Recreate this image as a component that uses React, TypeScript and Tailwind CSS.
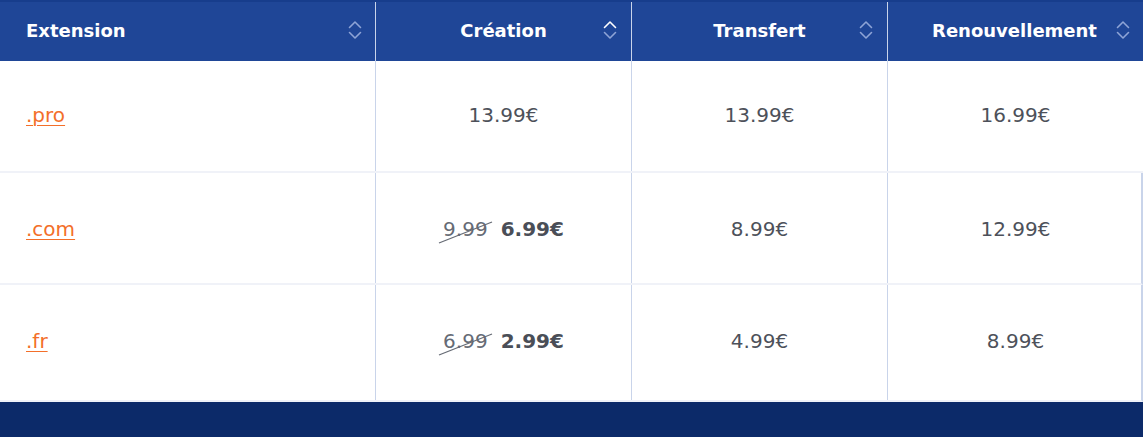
import React from "react";

const font = { fontFamily: "'DejaVu Sans', 'Open Sans', sans-serif" };

function SortIcon({ active }: { active?: boolean }) {
  return (
    <svg width="16" height="24" viewBox="0 0 16 24" fill="none" strokeWidth="1.6" strokeLinecap="round" strokeLinejoin="round">
      <path d="M2.5 9.5 L8 4 L13.5 9.5" stroke={active ? "#ffffff" : "#8ea4d6"} />
      <path d="M2.5 14.5 L8 20 L13.5 14.5" stroke="#8ea4d6" />
    </svg>
  );
}

function Old({ v }: { v: string }) {
  return (
    <span className="relative inline-block text-[#666b75]">
      {v}
      <svg className="absolute left-[-5px] top-[2px]" width="56" height="30" viewBox="0 0 56 30" fill="none">
        <path d="M1 27 L54 6" stroke="#666b75" strokeWidth="1.3" />
      </svg>
    </span>
  );
}

type Row = { ext: string; creation: React.ReactNode; transfert: string; renew: string; h: string; pb: string; right?: boolean };

const rows: Row[] = [
  { ext: ".pro", creation: "13.99€", transfert: "13.99€", renew: "16.99€", h: "h-[112px]", pb: "pb-[3px]" },
  {
    ext: ".com",
    creation: (
      <span className="flex items-center gap-[13px]">
        <Old v="9.99" />
        <b className="font-bold text-[#4a4e57]">6.99€</b>
      </span>
    ),
    transfert: "8.99€",
    renew: "12.99€",
    h: "h-[112px]",
    pb: "pt-[1px]",
    right: true,
  },
  {
    ext: ".fr",
    creation: (
      <span className="flex items-center gap-[13px]">
        <Old v="6.99" />
        <b className="font-bold text-[#4a4e57]">2.99€</b>
      </span>
    ),
    transfert: "4.99€",
    renew: "8.99€",
    h: "h-[117px]",
    pb: "pb-[3px]",
    right: true,
  },
];

export default function App() {
  return (
    <div className="w-[1143px] h-[437px] bg-white flex flex-col overflow-hidden" style={font}>
      <div className="grid grid-cols-[376px_256px_256px_255px] h-[61px] bg-[#1f4697] border-t-2 border-[#173d8c] text-white text-[18px] font-bold">
        <div className="flex items-center justify-between pl-[26px] pr-[12px] pb-[3px] border-r border-[#c9d4ea]">
          <span>Extension</span>
          <SortIcon />
        </div>
        <div className="relative flex items-center justify-center pb-[3px] border-r border-[#c9d4ea]">
          <span>Création</span>
          <span className="absolute right-[13px] top-[16px]"><SortIcon active /></span>
        </div>
        <div className="relative flex items-center justify-center pb-[3px] border-r border-[#c9d4ea]">
          <span>Transfert</span>
          <span className="absolute right-[13px] top-[16px]"><SortIcon /></span>
        </div>
        <div className="relative flex items-center justify-center pb-[3px]">
          <span className="pr-[2px]">Renouvellement</span>
          <span className="absolute right-[12px] top-[16px]"><SortIcon /></span>
        </div>
      </div>
      {rows.map((r, i) => (
        <div
          key={i}
          className={`grid grid-cols-[376px_256px_256px_255px] ${r.h} border-b-2 border-[#f0f2f8] text-[20px] text-[#4d515a] ${r.right ? "border-r-2 border-r-[#c9d4ea]" : ""}`}
        >
          <div className={`flex items-center pl-[26px] ${r.pb} border-r border-[#c9d4ea]`}>
            <a className="text-[#f36f2a] underline underline-offset-[3px] decoration-1">{r.ext}</a>
          </div>
          <div className={`flex items-center justify-center ${r.pb} border-r border-[#c9d4ea]`}>{r.creation}</div>
          <div className={`flex items-center justify-center ${r.pb} border-r border-[#c9d4ea]`}>{r.transfert}</div>
          <div className={`flex items-center justify-center ${r.pb}`}>{r.renew}</div>
        </div>
      ))}
      <div className="flex-1 bg-[#0c2a69]" />
    </div>
  );
}
